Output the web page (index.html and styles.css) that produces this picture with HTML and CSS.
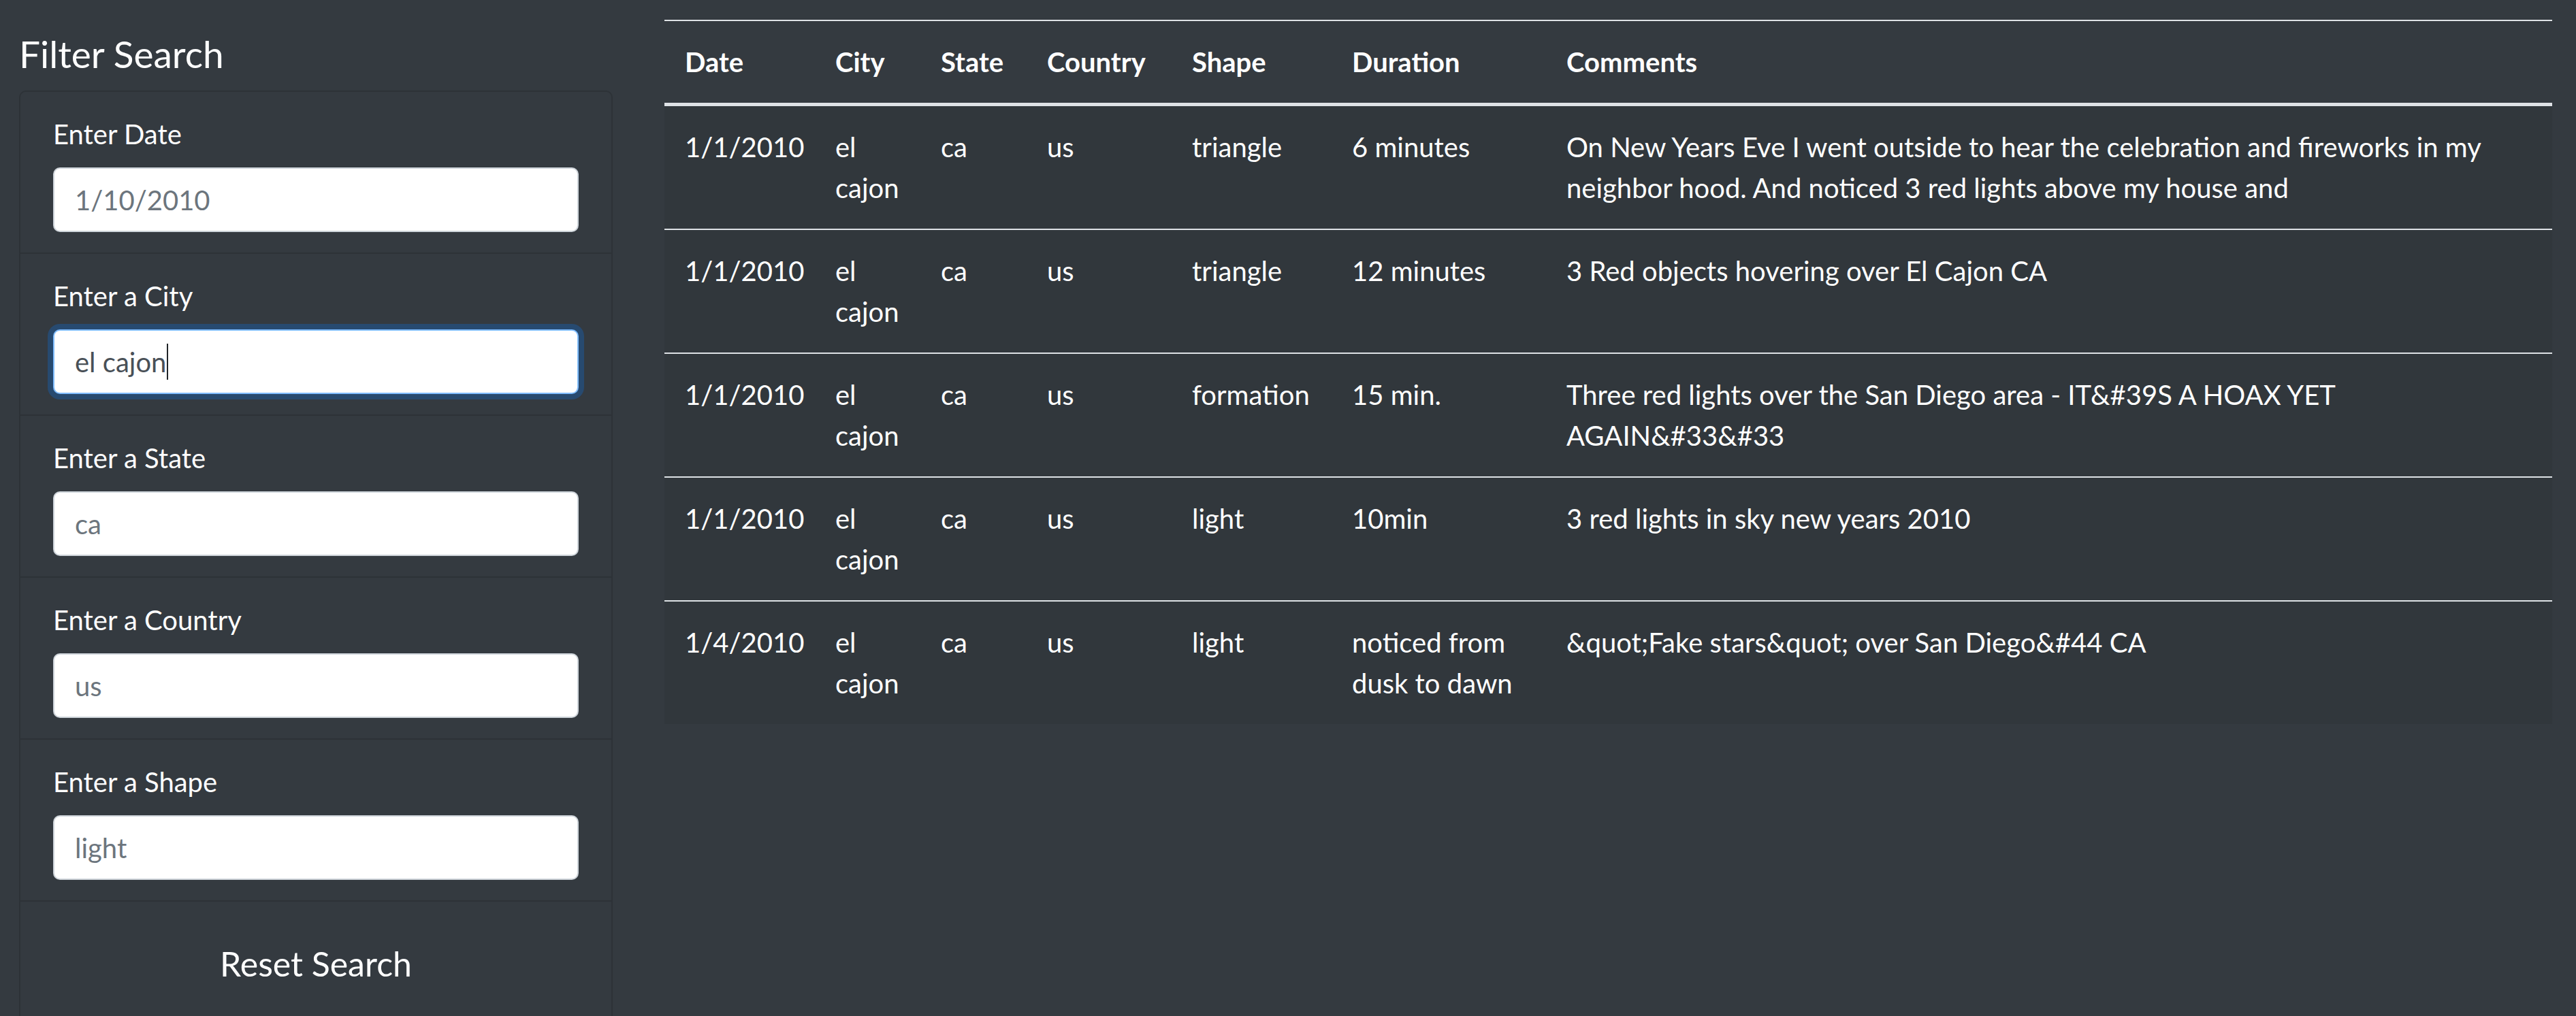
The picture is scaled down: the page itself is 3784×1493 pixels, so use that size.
FILE: index.html
```html
<!DOCTYPE html>
<html lang="en">
<head>
<meta charset="utf-8">
<title>UFO Sightings</title>
<link rel="stylesheet" href="styles.css">
</head>
<body>
<div class="page">
  <aside class="sidebar">
    <h4 class="sidebar-title">Filter Search</h4>
    <div class="card">
      <ul class="filter-list">
        <li class="filter-item">
          <label class="filter-label" for="datetime">Enter Date</label>
          <input class="filter-input" id="datetime" type="text" placeholder="1/10/2010">
        </li>
        <li class="filter-item">
          <label class="filter-label" for="city">Enter a City</label>
          <span class="input-wrap">
            <input class="filter-input is-focused" id="city" type="text" value="el cajon">
            <span class="caret" aria-hidden="true"></span>
          </span>
        </li>
        <li class="filter-item">
          <label class="filter-label" for="state">Enter a State</label>
          <input class="filter-input" id="state" type="text" placeholder="ca">
        </li>
        <li class="filter-item">
          <label class="filter-label" for="country">Enter a Country</label>
          <input class="filter-input" id="country" type="text" placeholder="us">
        </li>
        <li class="filter-item">
          <label class="filter-label" for="shape">Enter a Shape</label>
          <input class="filter-input" id="shape" type="text" placeholder="light">
        </li>
        <li class="filter-item">
          <button class="reset-btn" type="button">Reset Search</button>
        </li>
      </ul>
    </div>
  </aside>
  <main class="content">
    <table class="ufo-table">
      <colgroup>
        <col class="c-date"><col class="c-city"><col class="c-state"><col class="c-country"><col class="c-shape"><col class="c-duration"><col class="c-comments">
      </colgroup>
      <thead>
        <tr><th>Date</th><th>City</th><th>State</th><th>Country</th><th>Shape</th><th>Duration</th><th>Comments</th></tr>
      </thead>
      <tbody>
        <tr><td>1/1/2010</td><td>el cajon</td><td>ca</td><td>us</td><td>triangle</td><td>6 minutes</td><td>On New Years Eve I went outside to hear the celebration and fireworks in my neighbor hood. And noticed 3 red lights above my house and</td></tr>
        <tr><td>1/1/2010</td><td>el cajon</td><td>ca</td><td>us</td><td>triangle</td><td>12 minutes</td><td>3 Red objects hovering over El Cajon CA</td></tr>
        <tr><td>1/1/2010</td><td>el cajon</td><td>ca</td><td>us</td><td>formation</td><td>15 min.</td><td>Three red lights over the San Diego area - IT&amp;#39S A HOAX YET AGAIN&amp;#33&amp;#33</td></tr>
        <tr><td>1/1/2010</td><td>el cajon</td><td>ca</td><td>us</td><td>light</td><td>10min</td><td>3 red lights in sky new years 2010</td></tr>
        <tr><td>1/4/2010</td><td>el cajon</td><td>ca</td><td>us</td><td>light</td><td>noticed from dusk to dawn</td><td>&amp;quot;Fake stars&amp;quot; over San Diego&amp;#44 CA</td></tr>
      </tbody>
    </table>
  </main>
</div>
</body>
</html>
```
FILE: styles.css
```css
html, body {
  margin: 0;
  padding: 0;
  background: #343a40;
}
body {
  font-family: Lato, "Open Sans", sans-serif;
  font-size: 40px;
  line-height: 60px;
  color: #ffffff;
}
.page {
  display: flex;
  align-items: flex-start;
  gap: 76px;
  padding: 0 35px 0 28px;
}
.sidebar {
  flex: 0 0 872px;
  padding-top: 46px;
}
.sidebar-title {
  margin: 0 0 21px;
  font-size: 55px;
  line-height: 66px;
  font-weight: 400;
}
.card {
  border: 2px solid rgba(0, 0, 0, 0.13);
  border-radius: 10px;
  background: #343a40;
}
.filter-list {
  list-style: none;
  margin: 0;
  padding: 0;
}
.filter-item {
  padding: 32px 48px 30px;
  border-bottom: 2px solid rgba(0, 0, 0, 0.13);
}
.filter-item:last-child {
  border-bottom: 0;
}
.filter-label {
  display: block;
  margin-bottom: 19px;
  line-height: 60px;
}
.input-wrap {
  position: relative;
  display: block;
}
.filter-input {
  display: block;
  box-sizing: border-box;
  width: 100%;
  height: 95px;
  margin: 0;
  padding: 0 30px;
  border: 2px solid #ced4da;
  border-radius: 10px;
  background: #ffffff;
  font-family: inherit;
  font-size: 40px;
  line-height: 60px;
  color: #495057;
  outline: none;
}
.filter-input::placeholder {
  color: #6c757d;
  opacity: 1;
}
.filter-input.is-focused,
.filter-input:focus {
  border-color: #80bdff;
  box-shadow: 0 0 0 8px rgba(0, 123, 255, 0.25);
}
.caret {
  position: absolute;
  left: 167px;
  top: 21px;
  width: 2px;
  height: 53px;
  background: #212529;
}
.reset-btn {
  display: block;
  box-sizing: border-box;
  width: 100%;
  padding: 20px 40px;
  border: 2px solid transparent;
  border-radius: 12px;
  background: transparent;
  color: #ffffff;
  font-family: inherit;
  font-size: 50px;
  line-height: 75px;
  text-align: center;
}
.content {
  flex: 1 1 auto;
  padding-top: 29px;
}
.ufo-table {
  width: 100%;
  table-layout: fixed;
  border-collapse: collapse;
  color: #ffffff;
}
.c-date { width: 221px; }
.c-city { width: 155px; }
.c-state { width: 156px; }
.c-country { width: 213px; }
.c-shape { width: 235px; }
.c-duration { width: 315px; }
.ufo-table th,
.ufo-table td {
  padding: 30px;
  text-align: left;
  line-height: 60px;
  border-top: 2px solid #dee2e6;
}
.ufo-table th {
  font-weight: 700;
  vertical-align: bottom;
  border-bottom: 5px solid #dee2e6;
}
.ufo-table td {
  vertical-align: top;
}
.ufo-table tbody {
  background: rgba(0, 0, 0, 0.05);
}
.ufo-table tbody tr:first-child td {
  border-top: 0;
}
```
